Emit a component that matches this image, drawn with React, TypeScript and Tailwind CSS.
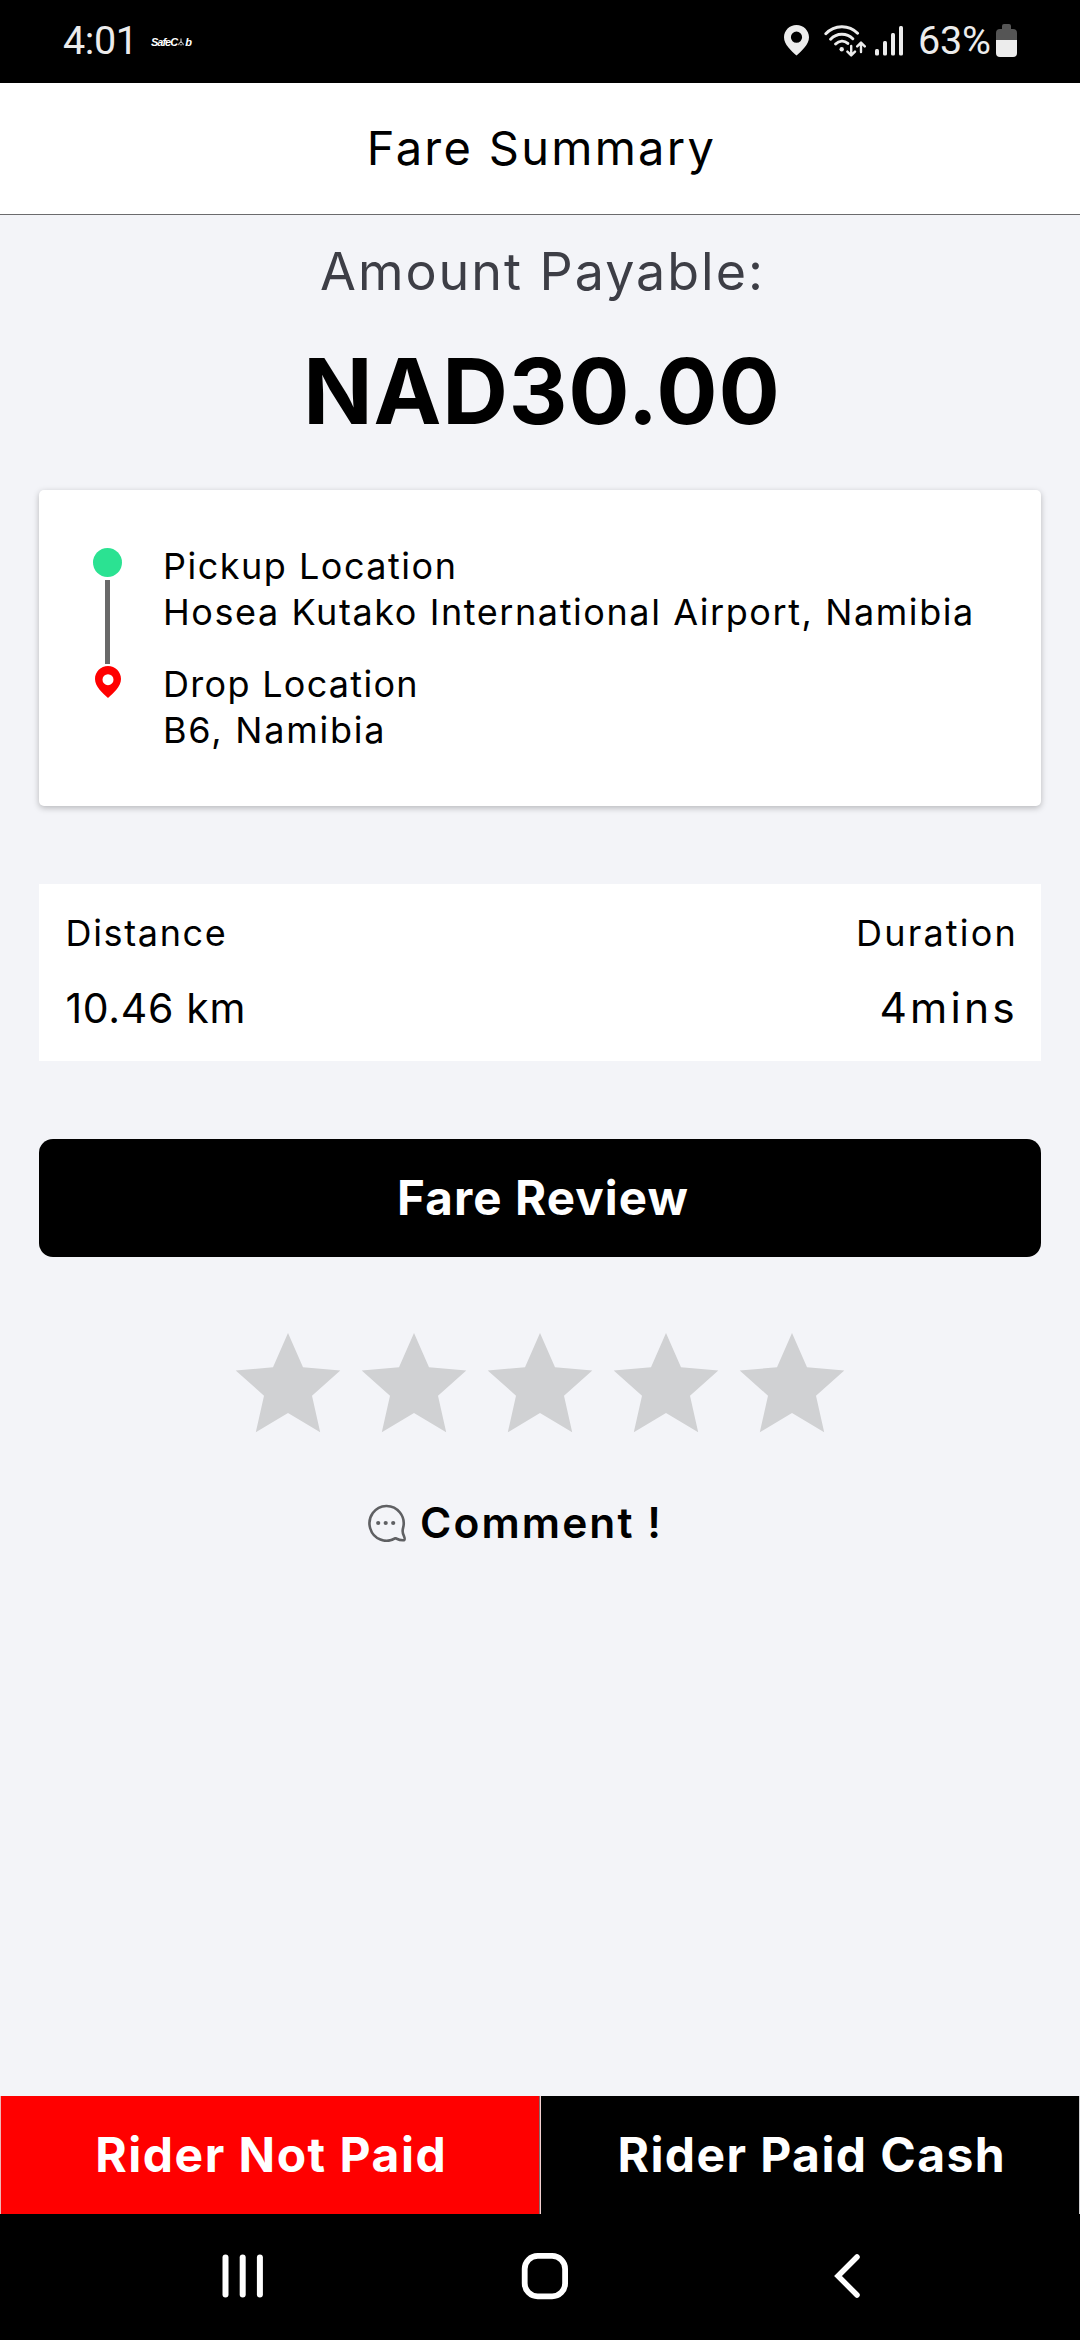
const StatusBar = () => (
  <div className="flex h-[83px] items-center bg-black pr-[63px] pb-[2px] pl-[63px] font-['Roboto',sans-serif] text-[39.5px] text-[#ececec]">
    <span className="w-[88px] tracking-[-0.4px]">4:01</span>
    <span className="mt-[3px] flex h-[12px] items-center font-['Liberation_Sans',sans-serif] text-[11px] leading-[12px] font-bold tracking-[-1px] text-white italic">
      SafeC
      <svg width="6" height="8" viewBox="0 0 6 8" className="mx-[1px]" fill="none" stroke="white" strokeWidth="0.9">
        <path d="M3 0.5v4M0.8 7.2c0-2 0.8-3 2.2-3s2.2 1 2.2 3M3 6v1.5" />
      </svg>
      b
    </span>
    <div className="ml-auto flex items-center">
      <svg width="25" height="31" viewBox="0 0 25 31" fill="#ececec" fillRule="evenodd">
        <path d="M12.5 0C5.6 0 0 5.5 0 12.3 0 19.4 7.2 26 12.5 30.5 17.8 26 25 19.4 25 12.3 25 5.5 19.4 0 12.5 0Zm0 6.6a5.6 5.6 0 1 1 0 11.2 5.6 5.6 0 0 1 0-11.2Z" />
      </svg>
      <svg
        width="42"
        height="32"
        viewBox="0 0 42 32"
        className="ml-[15px]"
        fill="none"
        stroke="#ececec"
        strokeWidth="2.9"
        strokeLinecap="round"
        strokeLinejoin="round"
      >
        <path d="M1.8 8.8C10.5-0.6 25-0.6 33.6 8.3M6.6 14.2C12.8 7.6 22.7 7.6 28.8 13.8M11.6 19C15.2 15.3 20.4 15.3 23.8 18.4" />
        <circle cx="17.7" cy="24.2" r="2.2" fill="#ececec" stroke="none" />
        <path strokeWidth="2.4" d="M27.2 21v9M23.4 26.6l3.8 3.8 3.8-3.8M37 27v-9M33.2 21.4l3.8-3.8 3.8 3.8" />
      </svg>
      <svg width="28" height="30" viewBox="0 0 28 30" className="ml-[9px]" fill="#ececec">
        <rect x="0" y="23" width="4" height="6.5" rx="1.5" />
        <rect x="8" y="15" width="4" height="14.5" rx="1.5" />
        <rect x="16" y="7" width="4" height="22.5" rx="1.5" />
        <rect x="24" y="0" width="4" height="29.5" rx="1.5" />
      </svg>
      <span className="ml-[15px] w-[78px] tracking-[-0.2px]">63%</span>
      <svg width="21" height="33" viewBox="0 0 21 33">
        <path d="M6 2a2 2 0 0 1 2-2h5a2 2 0 0 1 2 2v3h2a4 4 0 0 1 4 4v7H0V9a4 4 0 0 1 4-4h2Z" fill="#555" />
        <path d="M0 16h21v13a4 4 0 0 1-4 4H4a4 4 0 0 1-4-4Z" fill="#ececec" />
      </svg>
    </div>
  </div>
);

const Route = () => (
  <div className="mx-[39px] mt-[44px] flex h-[316px] rounded-[5px] bg-white pt-[52.5px] pl-[53px] text-[36px] leading-[46px] shadow-[0_2px_6px_rgba(0,0,0,0.25)]">
    <div className="flex w-[30px] flex-col items-center pt-[5px]">
      <div className="h-[29px] w-[29px] shrink-0 rounded-full bg-[#2be292]" />
      <div className="mt-[3px] h-[84px] w-[5px] shrink-0 bg-[#696969]" />
      <svg width="26" height="32" viewBox="0 0 26 32" className="mt-[2px] ml-[2px] shrink-0" fill="#ff0000" fillRule="evenodd">
        <path d="M13 0C5.8 0 0 5.7 0 13c0 7.6 7.5 14 13 19 5.5-5 13-11.4 13-19C26 5.7 20.2 0 13 0Zm0 8.2a5.5 5.5 0 1 1 0 11 5.5 5.5 0 0 1 0-11Z" />
      </svg>
    </div>
    <div className="ml-[41px] whitespace-nowrap">
      <p className="tracking-[1.5px]">Pickup Location</p>
      <p className="tracking-[1.58px]">Hosea Kutako International Airport, Namibia</p>
      <p className="mt-[26px] tracking-[1.29px]">Drop Location</p>
      <p className="tracking-[1.78px]">B6, Namibia</p>
    </div>
  </div>
);

const TripStats = () => (
  <div className="mx-[39px] mt-[78px] flex h-[177px] justify-between bg-white pt-[25.5px] pr-[23px] pl-[26.5px]">
    <div>
      <p className="text-[36px] leading-[46px] tracking-[1.66px]">Distance</p>
      <p className="mt-[27px] text-[41px] leading-[50px] tracking-[0.66px]">10.46 km</p>
    </div>
    <div className="text-right">
      <p className="text-[36px] leading-[46px] tracking-[2.2px]">Duration</p>
      <p className="mt-[27px] text-[42.5px] leading-[50px] tracking-[3.2px]">4mins</p>
    </div>
  </div>
);

const Stars = () => (
  <div className="mt-[76px] flex justify-center">
    {[...Array(5)].map((_, i) => (
      <svg key={i} width="126" height="100" viewBox="0 0 126 100" fill="#d0d1d3">
        <path d="M63 0 78 34.3 115.3 37.5 87 62.7 95.2 99.3 63 80 30.8 99.3 39 62.7 10.7 37.5 48 34.3Z" />
      </svg>
    ))}
  </div>
);

const NavBar = () => (
  <div className="flex h-[126px] items-center bg-black pb-[3px] pl-[222px]">
    <svg width="41" height="44" viewBox="0 0 41 44" fill="white">
      <rect x="0.5" y="0.5" width="6" height="43" rx="3" />
      <rect x="17.7" y="0.5" width="6" height="43" rx="3" />
      <rect x="34.9" y="0.5" width="6" height="43" rx="3" />
    </svg>
    <svg width="48" height="48" viewBox="0 0 48 48" className="ml-[258px]" fill="none" stroke="white" strokeWidth="5.8">
      <rect x="3.7" y="3.9" width="40.4" height="40.4" rx="13" />
    </svg>
    <svg
      width="29"
      height="46"
      viewBox="0 0 29 46"
      className="ml-[264px]"
      fill="none"
      stroke="white"
      strokeWidth="5.5"
      strokeLinecap="round"
    >
      <path d="M24 4 5 23l19 19" />
    </svg>
  </div>
);

export default function App() {
  return (
    <div className="flex h-[2340px] w-[1080px] flex-col overflow-hidden bg-[#f3f4f8] font-['Inter',sans-serif] text-black">
      <StatusBar />
      <header className="flex h-[132px] items-center justify-center border-b border-[#6b6b6d] bg-white pb-[1px] pl-[3px] text-[47px] tracking-[2.27px]">
        Fare Summary
      </header>

      <main className="flex-1">
        <p className="mt-[27px] pl-[5px] text-center text-[52px] leading-[60px] tracking-[1.97px] text-[#3d3e46]">Amount Payable:</p>
        <p className="mt-[34px] pl-[4px] text-center text-[91px] leading-[110px] font-bold tracking-[0.8px]">NAD30.00</p>
        <Route />
        <TripStats />
        <button className="mx-[39px] mt-[78px] flex h-[118px] w-[1002px] items-center justify-center rounded-[14px] bg-black pb-[1px] pl-[6px] text-[47.5px] font-bold tracking-[1.1px] text-white">
          Fare Review
        </button>
        <Stars />
        <div className="mt-[65px] flex h-[50px] items-center pl-[368px]">
          <svg width="38" height="38" viewBox="0 0 38 38" fill="none" stroke="#5f6063" strokeWidth="2.6" strokeLinejoin="round">
            <path d="M35.2 23.5A17.1 17.4 0 1 0 27.5 34.2C30.5 35.6 33.5 36.6 36 36.2 37.3 35.7 36.6 33.8 36 32.2 34.6 29.5 34.2 26.5 35.2 23.5Z" />
            <g fill="#5f6063" stroke="none">
              <circle cx="10.2" cy="19" r="2.1" />
              <circle cx="17.7" cy="19" r="2.1" />
              <circle cx="25.2" cy="19" r="2.1" />
            </g>
          </svg>
          <span className="ml-[14px] text-[42.5px] leading-[50px] font-semibold tracking-[2.1px]">Comment !</span>
        </div>
      </main>

      <footer className="flex h-[118px] text-[48px] font-bold text-white">
        <button className="flex flex-1 items-center justify-center border-x border-l-[#f0b4b4] border-r-[#8c6a6a] bg-[#ff0000] pl-[3px] tracking-[1.5px]">
          Rider Not Paid
        </button>
        <button className="flex flex-1 items-center justify-center border-x border-l-[#f3d0d0] border-r-[#cfcfd2] bg-black pl-[4px] tracking-[1.4px]">
          Rider Paid Cash
        </button>
      </footer>
      <NavBar />
    </div>
  );
}
